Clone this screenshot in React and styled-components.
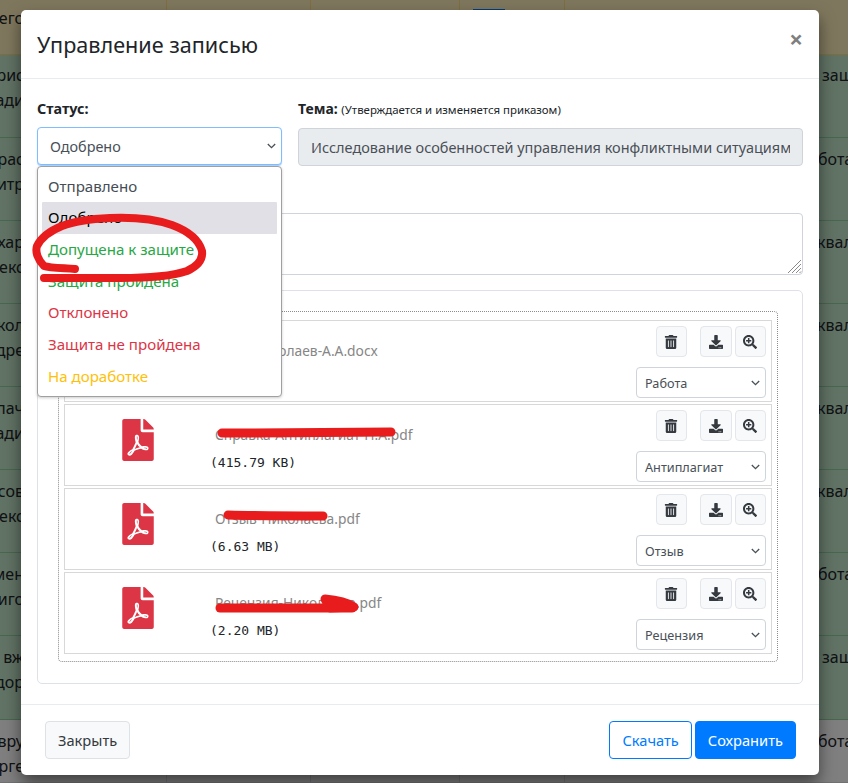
import React from 'react';
import styled, { createGlobalStyle } from 'styled-components';
import { FaTrashAlt, FaDownload, FaSearchPlus, FaFilePdf, FaFileWord } from 'react-icons/fa';

const chevron = "url(\"data:image/svg+xml,%3Csvg xmlns='http://www.w3.org/2000/svg' width='9' height='6' viewBox='0 0 9 6'%3E%3Cpath d='M.8 1l3.7 3.7L8.2 1' fill='none' stroke='%23495057' stroke-width='1.3'/%3E%3C/svg%3E\")";

const Global = createGlobalStyle`
  html, body { margin: 0; padding: 0; background: #fff; }
  body { font-family: "Noto Sans", "Liberation Sans", sans-serif; color: #212529; }
  * { box-sizing: border-box; }
`;

const Page = styled.div`
  position: relative;
  width: 848px;
  height: 783px;
  overflow: hidden;
`;

/* ---------- table behind the dialog ---------- */
const TableRow = styled.div`
  display: grid;
  grid-template-columns: 167px 144px 149px 105px 1fr;
  height: ${p => p.$h}px;
  background: ${p => p.$bg};
  border-bottom: 1px solid ${p => p.$line};
  font-size: 16px;
  line-height: 24.5px;
  color: #212529;
`;
const NameCell = styled.div`
  display: flex;
  flex-direction: column;
  align-items: flex-end;
  overflow: hidden;
  white-space: nowrap;
  padding: ${p => p.$top}px 142px 0 0;
  border-right: 1px solid ${p => p.$line};
`;
const GridCell = styled.div`
  border-right: 1px solid ${p => p.$line};
`;
const Pill = styled.div`
  width: 32px;
  height: 12px;
  margin: 9px 0 0 13px;
  background: #007bff;
`;
const KindCell = styled.div`
  overflow: hidden;
  white-space: nowrap;
  padding-top: ${p => p.$top}px;
  padding-left: ${p => p.$left}px;
`;
const Backdrop = styled.div`
  position: absolute;
  inset: 0;
  background: rgba(0, 0, 0, 0.5);
`;

/* ---------- dialog ---------- */
const Dialog = styled.div`
  position: absolute;
  left: 21px;
  top: 10px;
  width: 798px;
  height: 765px;
  background: #fff;
  border-radius: 5px;
  box-shadow: 0 8px 16px rgba(0, 0, 0, 0.5);
  display: flex;
  flex-direction: column;
`;
const Header = styled.header`
  height: 69px;
  flex: none;
  padding: 0 16px;
  border-bottom: 1px solid #e9ecef;
  display: flex;
  align-items: flex-start;
  justify-content: space-between;
`;
const Title = styled.h5`
  margin: 19px 0 0;
  font-size: 21.6px;
  line-height: 32px;
  font-weight: 400;
  color: #212529;
`;
const CloseX = styled.button`
  border: 0;
  background: none;
  padding: 0;
  margin: 13px 0 0;
  font-family: inherit;
  font-size: 24px;
  line-height: 32px;
  font-weight: 700;
  color: #7f7f7f;
`;
const Body = styled.div`
  flex: 1;
  padding: 19px 16px 0;
  display: flex;
  flex-direction: column;
`;
const TopFields = styled.div`
  display: grid;
  grid-template-columns: 245px 1fr;
  column-gap: 16px;
`;
const Field = styled.div`
  position: relative;
`;
const Label = styled.label`
  display: block;
  font-size: 14.4px;
  line-height: 21px;
  font-weight: 700;
  margin-bottom: 8px;
  white-space: nowrap;
`;
const ThemeLabel = styled(Label)`
  font-size: 14px;
`;
const Note = styled.span`
  font-size: 11.45px;
  font-weight: 400;
`;
const StatusSelect = styled.select`
  display: block;
  width: 100%;
  height: 38px;
  padding: 6px 24px 6px 12px;
  appearance: none;
  font-family: inherit;
  font-size: 14.4px;
  color: #495057;
  background: #fff ${chevron} no-repeat right 5px center;
  border: 1px solid #80bdff;
  border-radius: 4px;
  box-shadow: 0 1px 1px rgba(0, 123, 255, 0.35);
`;
const ThemeInput = styled.input`
  display: block;
  width: 100%;
  height: 38px;
  padding: 6px 12px;
  font-family: inherit;
  font-size: 14.48px;
  color: #495057;
  background: #e9ecef;
  border: 1px solid #ced4da;
  border-radius: 4px;
`;
const Menu = styled.ul`
  position: absolute;
  z-index: 5;
  top: 100%;
  left: 0;
  width: 245px;
  height: 231px;
  margin: 0;
  padding: 3.5px 4px;
  list-style: none;
  background: #fff;
  border: 1px solid #a0a0a0;
  border-radius: 4px;
  box-shadow: 0 1px 3px rgba(0, 0, 0, 0.2);
`;
const MenuItem = styled.li`
  height: 31.7px;
  padding: 0 6px;
  font-size: 15.1px;
  line-height: 31.7px;
  color: ${p => p.$color};
  background: ${p => (p.$active ? '#e0e0e6' : 'transparent')};
  border-radius: 1px;
  white-space: nowrap;
`;
const CommentField = styled.div`
  position: relative;
  margin-top: 18px;
`;
const Comment = styled.textarea`
  display: block;
  width: 100%;
  height: 62px;
  border: 1px solid #ced4da;
  border-radius: 4px;
  background: #fff;
  resize: none;
`;
const ResizeGrip = styled.svg`
  position: absolute;
  right: 1px;
  bottom: 1px;
`;
const Card = styled.section`
  margin-top: 15px;
  padding: 20px 24px 21px 20px;
  border: 1px solid #dee2e6;
  border-radius: 5px;
`;
const DropZone = styled.div`
  border: 1px dotted #8c8c8c;
  border-radius: 4px;
  padding: 8px 5px 7px;
  display: flex;
  flex-direction: column;
  gap: 2px;
`;
const FileRow = styled.div`
  height: 82px;
  border: 1px solid #d8d8d8;
  display: grid;
  grid-template-columns: 145px 1fr 136px;
`;
const FileIcon = styled.div`
  display: flex;
  justify-content: center;
  padding: 14px 0 0 1px;
  color: #dc3545;
  font-size: 42px;
  line-height: 0;
`;
const FileInfo = styled.div`
  padding-top: 19px;
`;
const FileName = styled.div`
  margin-left: 5px;
  font-size: 13.8px;
  line-height: 21px;
  color: #868686;
  white-space: nowrap;
`;
const FileSize = styled.div`
  margin-top: 8px;
  font-family: "DejaVu Sans Mono", monospace;
  font-size: 13px;
  line-height: 19px;
  color: #212529;
`;
const FileActions = styled.div`
  padding: 5px 5px 0 0;
  display: flex;
  flex-direction: column;
  align-items: flex-end;
`;
const ActionBar = styled.div`
  display: flex;
  gap: 3px;
`;
const IconButton = styled.button`
  width: 31.5px;
  height: 31px;
  margin-right: ${p => p.$after || 0}px;
  padding: 0;
  display: flex;
  align-items: center;
  justify-content: center;
  background: #f8f9fa;
  border: 1px solid #e3e6ea;
  border-radius: 4px;
  color: #343a40;
  font-size: 14px;
`;
const TypeSelect = styled.select`
  width: 130px;
  height: 31px;
  margin: 10px 0 0;
  padding: 0 18px 0 8px;
  appearance: none;
  font-family: inherit;
  font-size: 12.7px;
  color: #495057;
  background: #fff ${chevron} no-repeat right 5px center;
  border: 1px solid #ced4da;
  border-radius: 4px;
`;
const Footer = styled.footer`
  height: 71px;
  flex: none;
  padding: 16px 23px 16px 24px;
  border-top: 1px solid #e9ecef;
  display: flex;
  align-items: flex-start;
  gap: 3px;
`;
const Btn = styled.button`
  height: 38px;
  padding: 0 12px;
  margin-left: ${p => (p.$push ? 'auto' : 0)};
  font-family: inherit;
  font-size: 14.65px;
  border-radius: 4px;
  border: 1px solid ${p => p.$border};
  background: ${p => p.$bg};
  color: ${p => p.$color};
`;
const Scribbles = styled.svg`
  position: absolute;
  left: 0;
  top: 0;
  z-index: 10;
  pointer-events: none;
`;

const green = { bg: '#c3e6cb', line: '#8fd19e' };
const rows = [
  { h: 55, bg: '#ffeeba', line: '#ffdf7e', top: 6, name: ['его'], kind: '', left: 0 },
  { h: 83, ...green, top: 8, name: ['рис', 'ади'], kind: 'защита', left: 257 },
  { h: 83, ...green, top: 9, name: ['прас', 'нитр'], kind: 'бота', left: 253 },
  { h: 83, ...green, top: 9, name: ['хар', 'екс'], kind: 'квал', left: 252 },
  { h: 83, ...green, top: 9, name: ['кол', 'дре'], kind: 'квал', left: 252 },
  { h: 83, ...green, top: 9, name: ['лпач', 'ади'], kind: 'квал', left: 252 },
  { h: 83, ...green, top: 9, name: ['сов', 'екс'], kind: 'квал', left: 252 },
  { h: 83, ...green, top: 9, name: ['мен', 'иго'], kind: 'бота', left: 253 },
  { h: 84, ...green, top: 9, name: ['вж', 'едор'], kind: 'защита', left: 257 },
  { h: 63, bg: '#ffffff', line: '#dee2e6', top: 9, name: ['вру', 'рге'], kind: 'бота', left: 253 },
];

const statuses = [
  ['Отправлено', '#454d55'],
  ['Одобрено', '#000'],
  ['Допущена к защите', '#28a745'],
  ['Защита пройдена', '#28a745'],
  ['Отклонено', '#dc3545'],
  ['Защита не пройдена', '#dc3545'],
  ['На доработке', '#ffc107'],
];

const files = [
  { Icon: FaFileWord, name: 'Тема-Николаев-А.А.docx', size: '(3.12 MB)', type: 'Работа' },
  { Icon: FaFilePdf, name: 'Справка-Антиплагиат-Н.А.pdf', size: '(415.79 KB)', type: 'Антиплагиат' },
  { Icon: FaFilePdf, name: 'Отзыв-Николаева.pdf', size: '(6.63 MB)', type: 'Отзыв' },
  { Icon: FaFilePdf, name: 'Рецензия-Николаева.pdf', size: '(2.20 MB)', type: 'Рецензия' },
];

const typeOptions = ['Работа', 'Антиплагиат', 'Отзыв', 'Рецензия'];

export default function App() {
  return (
    <Page>
      <Global />
      {rows.map((r, i) => (
        <TableRow key={i} $h={r.h} $bg={r.bg} $line={r.line}>
          <NameCell $top={r.top} $line={r.line}>
            {r.name.map(n => <span key={n}>{n}</span>)}
          </NameCell>
          <GridCell $line={r.line} />
          <GridCell $line={r.line} />
          <GridCell $line={r.line}>{i === 0 && <Pill />}</GridCell>
          <KindCell $top={r.top} $left={r.left}>{r.kind}</KindCell>
        </TableRow>
      ))}
      <Backdrop />
      <Dialog>
        <Header>
          <Title>Управление записью</Title>
          <CloseX>×</CloseX>
        </Header>
        <Body>
          <TopFields>
            <Field>
              <Label>Статус:</Label>
              <StatusSelect defaultValue="Одобрено">
                {statuses.map(([s]) => <option key={s}>{s}</option>)}
              </StatusSelect>
              <Menu>
                {statuses.map(([s, c]) => (
                  <MenuItem key={s} $color={c} $active={s === 'Одобрено'}>{s}</MenuItem>
                ))}
              </Menu>
            </Field>
            <Field>
              <ThemeLabel>Тема: <Note>(Утверждается и изменяется приказом)</Note></ThemeLabel>
              <ThemeInput disabled defaultValue="Исследование особенностей управления конфликтными ситуациями" />
            </Field>
          </TopFields>
          <CommentField>
            <Label>Комментарий:</Label>
            <Comment />
            <ResizeGrip width="15" height="15" viewBox="0 0 15 15" stroke="#8a8a8a" strokeWidth="1">
              <path d="M1 14L14 1M5 14L14 5M9 14L14 9M12.5 14L14 12.5" />
            </ResizeGrip>
          </CommentField>
          <Card>
            <DropZone>
              {files.map(f => (
                <FileRow key={f.type}>
                  <FileIcon><f.Icon /></FileIcon>
                  <FileInfo>
                    <FileName>{f.name}</FileName>
                    <FileSize>{f.size}</FileSize>
                  </FileInfo>
                  <FileActions>
                    <ActionBar>
                      <IconButton $after={10}><FaTrashAlt /></IconButton>
                      <IconButton><FaDownload /></IconButton>
                      <IconButton><FaSearchPlus /></IconButton>
                    </ActionBar>
                    <TypeSelect defaultValue={f.type}>
                      {typeOptions.map(o => <option key={o}>{o}</option>)}
                    </TypeSelect>
                  </FileActions>
                </FileRow>
              ))}
            </DropZone>
          </Card>
        </Body>
        <Footer>
          <Btn $bg="#f8f9fa" $border="#dee2e6" $color="#343a40">Закрыть</Btn>
          <Btn $push $bg="#fff" $border="#007bff" $color="#007bff">Скачать</Btn>
          <Btn $bg="#007bff" $border="#007bff" $color="#fff">Сохранить</Btn>
        </Footer>
      </Dialog>
      <Scribbles width="848" height="783" viewBox="0 0 848 783" fill="none" stroke="#e81c1c" strokeLinecap="round" strokeLinejoin="round">
        <path strokeWidth="8" d="M75 269 C62 268 50 268 44 266 C38 260 35 252 37 246 C42 236 52 230 62 226 C75 221 90 219 110 218 C135 217 155 219 172 225 C188 231 199 240 202 251 C203 259 198 266 187 271 C172 276 150 278 120 278 C95 278 70 278 44 278" />
        <path strokeWidth="9" d="M222 433 C280 433 340 432 391 432" />
        <path strokeWidth="9" d="M228 515 C260 516 295 516 323 516" />
        <path strokeWidth="9" d="M220 608 C270 608 310 608 352 608" />
        <path strokeWidth="9" d="M325 599 C338 600 348 603 354 607 L330 608 Z" fill="#e81c1c" />
      </Scribbles>
    </Page>
  );
}
